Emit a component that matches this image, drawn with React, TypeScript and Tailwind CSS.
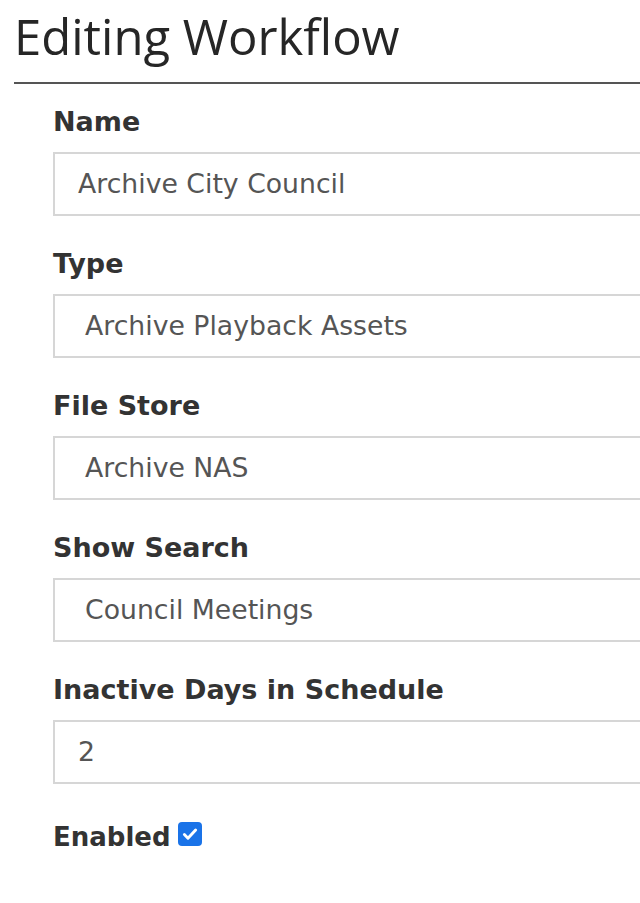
import React from "react";

const fields = [
  { label: "Name", value: "Archive City Council", select: false },
  { label: "Type", value: "Archive Playback Assets", select: true },
  { label: "File Store", value: "Archive NAS", select: true },
  { label: "Show Search", value: "Council Meetings", select: true },
  { label: "Inactive Days in Schedule", value: "2", select: false },
];

const App: React.FC = () => {
  return (
    <div className="w-[640px] h-[903px] overflow-hidden bg-white font-['DejaVu_Sans',sans-serif]">
      <div className="pl-[14px]">
        <h1 className="w-[700px] border-b-2 border-[#555] pt-[8px] pb-[17px] text-[49px] leading-[57px] text-[#262626] font-['Open_Sans',sans-serif]">
          Editing Workflow
        </h1>
      </div>

      <form className="pl-[53px] pt-[22px]">
        {fields.map((f) => (
          <div key={f.label} className="mb-[32px]">
            <label className="block mb-[14px] text-[27px] leading-[32px] font-bold text-[#333]">{f.label}</label>
            <div
              className={`w-[640px] h-[64px] flex items-center border-2 border-[#d6d6d6] text-[26.7px] text-[#555] ${
                f.select ? "pl-[30px]" : "pl-[23px]"
              }`}
            >
              {f.value}
            </div>
          </div>
        ))}

        <div className="flex items-center gap-[7px] pt-[5px]">
          <span className="text-[26px] leading-[32px] font-bold text-[#333]">Enabled</span>
          <span className="w-[24px] h-[24px] rounded-[4px] bg-[#1a73e8] flex items-center justify-center -mt-[6px]">
            <svg width="18" height="18" viewBox="0 0 16 16" fill="none">
              <path d="M3 8.5l3.2 3.2L13 4.5" stroke="white" strokeWidth="2.6" strokeLinecap="round" strokeLinejoin="round" />
            </svg>
          </span>
        </div>
      </form>
    </div>
  );
};

export default App;
